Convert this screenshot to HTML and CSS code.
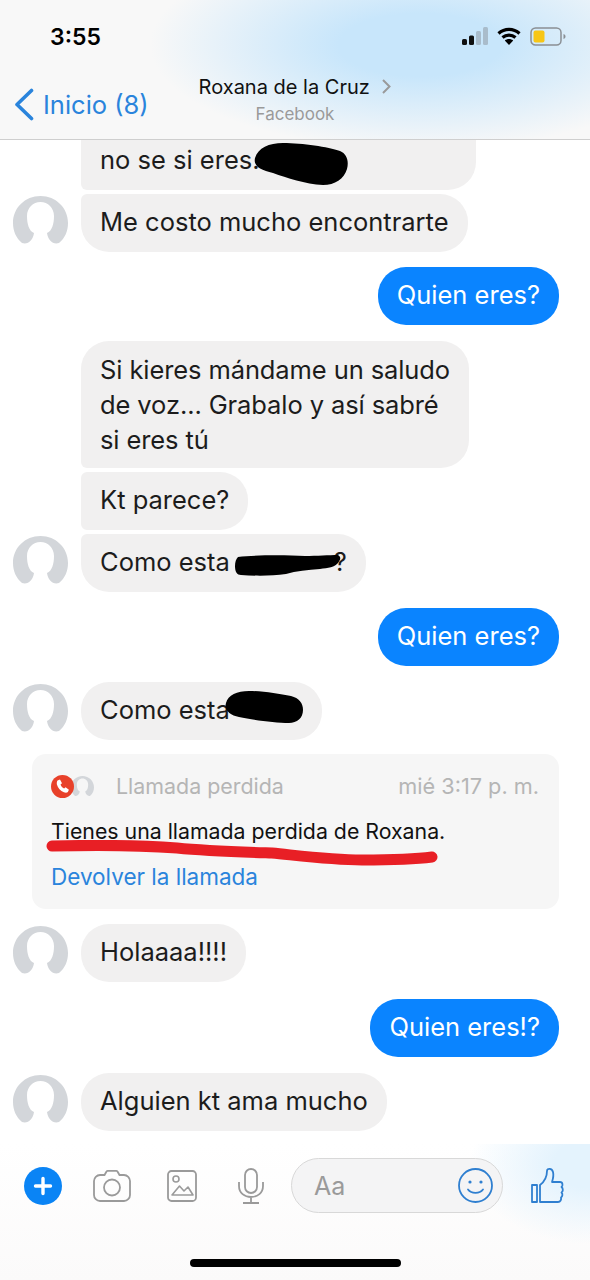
FILE: index.html
```html
<!DOCTYPE html>
<html lang="es">
  <head>
    <meta charset="UTF-8" />
    <meta name="viewport" content="width=device-width, initial-scale=1.0" />
    <title>Roxana de la Cruz</title>
    <link rel="stylesheet" href="styles.css">
  </head>
  <body>
    <svg class="defs" width="0" height="0">
      <symbol id="avatar" viewBox="0 0 55 50">
        <path fill="#d3d6da" d="M9 47C3 42 0 35 0 27 0 12 12 0 27.5 0S55 12 55 27c0 8-3 15-9 20-6 2-11-3-12-10 5-2 7-9 7-17 0-8-6-14-13.500-14S14 12 14 20c0 8 2 15 7 17-1 7-6 12-12 10z" />
      </symbol>
    </svg>

    <header class="top">
      <div class="status">
        <span class="time">3:55</span>
        <div class="status-icons">
          <svg class="signal" width="26" height="18" viewBox="0 0 26 18">
            <rect x="0" y="12" width="5" height="6" rx="1.500" fill="#111" />
            <rect x="7" y="8.500" width="5" height="9.500" rx="1.500" fill="#111" />
            <rect x="14" y="4" width="5" height="14" rx="1.500" fill="#a9bccb" />
            <rect x="21" y="0" width="5" height="18" rx="1.500" fill="#a9bccb" />
          </svg>
          <svg class="wifi" width="24" height="18" viewBox="0 0 24 18">
            <path fill="none" stroke="#000" stroke-width="3.200" d="M1.500 6.500C7.500 1 16.500 1 22.500 6.500M5.500 10.500c3.800-3.300 9.200-3.300 13 0" />
            <path d="M12 18l-4.200-4.500c2.400-2 6-2 8.400 0z" />
          </svg>
          <svg class="battery" width="36" height="19" viewBox="0 0 36 19">
            <rect x="1" y="1" width="30" height="17" rx="4.500" fill="none" stroke="#8a8f94" stroke-width="1.500" />
            <rect x="3.500" y="3.500" width="11" height="12" rx="2" fill="#f7c616" />
            <path d="M33.500 7v5c1.500-.5 2-1.500 2-2.500s-.5-2-2-2.500z" fill="#8a8f94" />
          </svg>
        </div>
      </div>
      <div class="nav">
        <a class="back">
          <svg width="20" height="33" viewBox="0 0 20 33">
            <path fill="none" stroke="#2a84dc" stroke-width="3.600" stroke-linecap="round" stroke-linejoin="round" d="M17.500 2.500L3 16.500l14.500 14" />
          </svg>
          <span>Inicio (8)</span>
        </a>
        <div class="who">
          <div class="who-name">
            Roxana de la Cruz
            <svg width="9" height="15" viewBox="0 0 9 15">
              <path fill="none" stroke="#9a9a9a" stroke-width="2" d="M1 1l6.500 6.500L1 14" />
            </svg>
          </div>
          <div class="who-sub">Facebook</div>
        </div>
        <div></div>
      </div>
    </header>

    <main class="chat">
      <div class="row in first">
        <div class="bubble clipped">
          no se si eres.
          <svg class="blot blot-a" width="96" height="42" viewBox="0 0 96 42">
            <path d="M2 15C5 5 16 0 30 0c20 0 45 4 57 8 7 3 9 10 7 18-3 10-12 16-24 16-18-1-36-7-50-12C9 27 0 24 2 15z" />
          </svg>
        </div>
      </div>
      <div class="row in tight avatar-row">
        <svg class="avatar"><use href="#avatar" /></svg>
        <div class="bubble joined">Me costo mucho encontrarte</div>
      </div>

      <div class="row out mt15"><div class="bubble blue">Quien eres?</div></div>

      <div class="row in">
        <div class="bubble multi">Si kieres mándame un saludo<br />de voz... Grabalo y así sabré<br />si eres tú</div>
      </div>
      <div class="row in tight"><div class="bubble joined mid">Kt parece?</div></div>
      <div class="row in tight avatar-row">
        <svg class="avatar"><use href="#avatar" /></svg>
        <div class="bubble joined">
          Como esta<span class="gap-b"></span>?
          <svg class="blot blot-b" width="106" height="22" viewBox="0 0 106 22">
            <path d="M3 3C20 1 50 1 70 2c12 0 24-1 33-1 3 2 3 4 0 8-3 4-10 5-18 6-12 1-24 2-34 5-14 2-30 2-45 1C2 21 0 18 0 12 0 8 1 5 3 3z" />
          </svg>
        </div>
      </div>

      <div class="row out"><div class="bubble blue">Quien eres?</div></div>

      <div class="row in avatar-row">
        <svg class="avatar"><use href="#avatar" /></svg>
        <div class="bubble">
          Como esta<span class="gap-c"></span>
          <svg class="blot blot-c" width="78" height="32" viewBox="0 0 78 32">
            <path d="M1 12C3 4 12 0 24 0c14 0 30 3 42 5 8 2 12 7 12 14 0 8-6 13-14 13-14 0-36-3-50-6C5 24-1 19 1 12z" />
          </svg>
        </div>
      </div>

      <section class="call">
        <div class="call-head">
          <div class="call-icons">
            <svg class="call-avatar"><use href="#avatar" /></svg>
            <svg class="call-phone" width="23" height="23" viewBox="0 0 23 23">
              <circle cx="11.500" cy="11.500" r="11.500" fill="#e8412a" />
              <path fill="#fff" d="M6.500 5.500l2.500-1 2 3.800-1.500 1.300c.6 1.800 2 3.300 3.600 4l1.500-1.300 3.300 2.400-1 2.300c-1 .8-2.500.8-4 .2-3.500-1.400-6-4.200-7-7.700-.3-1.700 0-3 .6-4z" />
            </svg>
          </div>
          <span class="call-title">Llamada perdida</span>
          <span class="call-time">mié 3:17 p. m.</span>
        </div>
        <p class="call-text">Tienes una llamada perdida de Roxana.</p>
        <a class="call-link">Devolver la llamada</a>
        <svg class="scribble" width="400" height="28" viewBox="0 0 400 28">
          <path fill="none" stroke="#e81f25" stroke-width="11" stroke-linecap="round" stroke-linejoin="round" d="M6 6c40-1 85-1 125 2 30 3 65 4 95 5 30 3 60 7 90 7 25 0 55-1 70-3" />
        </svg>
      </section>

      <div class="row in mt15 avatar-row">
        <svg class="avatar"><use href="#avatar" /></svg>
        <div class="bubble">Holaaaa!!!!</div>
      </div>

      <div class="row out mt17"><div class="bubble blue">Quien eres!?</div></div>

      <div class="row in avatar-row">
        <svg class="avatar"><use href="#avatar" /></svg>
        <div class="bubble">Alguien kt ama mucho</div>
      </div>
    </main>

    <footer class="composer">
      <div class="tools">
        <svg class="tool-plus" width="38" height="38" viewBox="0 0 38 38">
          <circle cx="19" cy="19" r="19" fill="#0a84f5" />
          <path stroke="#fff" stroke-width="3.400" stroke-linecap="round" d="M19 11.500v15M11.500 19h15" />
        </svg>
        <svg class="tool-camera" width="38" height="32" viewBox="0 0 38 32">
          <path fill="none" stroke="#9a9a9a" stroke-width="1.800" d="M7 5h4.500l2-3.500c.3-.4.700-.6 1.200-.6h8.600c.5 0 .9.200 1.200.6l2 3.500H31c3.300 0 6 2.700 6 6v14c0 3.300-2.700 6-6 6H7c-3.300 0-6-2.700-6-6V11c0-3.300 2.700-6 6-6z" />
          <circle cx="19" cy="17.500" r="8" fill="none" stroke="#9a9a9a" stroke-width="1.800" />
        </svg>
        <svg class="tool-image" width="30" height="32" viewBox="0 0 30 32">
          <rect x="1" y="1" width="28" height="30" rx="3.500" fill="none" stroke="#9a9a9a" stroke-width="1.800" />
          <circle cx="9" cy="9" r="3" fill="none" stroke="#9a9a9a" stroke-width="1.600" />
          <path fill="none" stroke="#9a9a9a" stroke-width="1.600" stroke-linejoin="round" d="M5 25l7.500-9 4.500 5 4-4 5 8z" />
        </svg>
        <svg class="tool-mic" width="26" height="36" viewBox="0 0 26 36">
          <rect x="7" y="1" width="12" height="24" rx="6" fill="none" stroke="#9a9a9a" stroke-width="1.800" />
          <path fill="none" stroke="#9a9a9a" stroke-width="1.800" d="M1 14v4c0 7 5.500 11 12 11s12-4 12-11v-4M13 29v6M5 35h16" />
        </svg>
        <div class="input">
          <span class="input-hint">Aa</span>
          <svg width="35" height="35" viewBox="0 0 35 35">
            <circle cx="17.500" cy="17.500" r="16.500" fill="none" stroke="#2f7fd0" stroke-width="1.800" />
            <circle cx="12" cy="14" r="1.600" fill="#2f7fd0" />
            <circle cx="23" cy="14" r="1.600" fill="#2f7fd0" />
            <path fill="none" stroke="#2f7fd0" stroke-width="1.800" stroke-linecap="round" d="M10 21.500c3.500 4.500 11.500 4.500 15 0" />
          </svg>
        </div>
        <svg class="tool-like" width="34" height="38" viewBox="0 0 34 38">
          <path fill="none" stroke="#2f7fd0" stroke-width="1.800" stroke-linejoin="round" d="M1 18h5v17H1zM9 35V18c4-3 7-8 7-14 0-3 5-3 6 1 1 4 0 7-1 10h8c3 0 3 4 1.500 5 2 1.500 1.500 4.500 0 5.500 1.500 1.500 1 4-.5 5 .5 2-.5 4.500-3 4.500z" />
        </svg>
      </div>
      <div class="home-bar"></div>
    </footer>
  </body>
</html>
```

FILE: styles.css
```css
* {
  box-sizing: border-box;
}

body {
  margin: 0;
  width: 590px;
  height: 1280px;
  overflow: hidden;
  display: flex;
  flex-direction: column;
  background-color: #ffffff;
  color: #1c1c1c;
  font-family: Inter, "Noto Sans", sans-serif;
}

.defs {
  position: absolute;
}

/* cabecera */
.top {
  height: 140px;
  flex: none;
  border-bottom: 1px solid #cfcfcf;
  background:
    radial-gradient(ellipse 270px 105px at 420px 45px, #c8e6fb 30%, rgba(200, 230, 251, 0) 100%),
    #f8f8f8;
}

.status {
  height: 72px;
  display: flex;
  align-items: center;
  justify-content: space-between;
  padding: 0 24px 0 50px;
}

.time {
  margin-top: 2px;
  font-size: 23px;
  font-weight: 600;
  color: #000000;
}

.status-icons {
  display: flex;
  align-items: center;
  gap: 9px;
}

.nav {
  display: grid;
  grid-template-columns: 1fr auto 1fr;
  align-items: center;
  height: 58px;
}

.back {
  display: flex;
  align-items: center;
  gap: 9px;
  margin-top: 6px;
  padding-left: 14px;
  color: #2a84dc;
  font-size: 25.500px;
  white-space: nowrap;
}

.who {
  text-align: center;
  margin-top: -2px;
}

.who-name {
  font-size: 20px;
  line-height: 27px;
  color: #111111;
  white-space: nowrap;
}

.who-name svg {
  margin-left: 7px;
}

.who-sub {
  margin-top: 1px;
  font-size: 17px;
  line-height: 24px;
  color: #9a9a9a;
}

/* mensajes */
.chat {
  flex: 1;
  overflow: hidden;
}

.row {
  display: flex;
  margin-top: 16px;
}

.row.first {
  margin-top: 0;
}

.row.tight {
  margin-top: 4px;
}

.row.mt15 {
  margin-top: 15px;
}

.row.mt17 {
  margin-top: 17px;
}

.row.in {
  padding-left: 81px;
}

.row.avatar-row {
  padding-left: 13px;
  gap: 13px;
}

.row.out {
  justify-content: flex-end;
  padding-right: 31px;
}

.avatar {
  width: 55px;
  height: 50px;
  flex: none;
  margin-top: 2px;
}

.bubble {
  position: relative;
  min-height: 58px;
  padding: 10px 19px 13px;
  border-radius: 28px;
  background-color: #f1f0f0;
  font-size: 25.500px;
  line-height: 35px;
  white-space: nowrap;
}

.bubble.blue {
  background-color: #0a84ff;
  color: #ffffff;
}

.bubble.clipped {
  width: 395px;
  min-height: 50px;
  height: 50px;
  padding-top: 2px;
  border-radius: 0 0 28px 6px;
}

.bubble.joined {
  border-top-left-radius: 6px;
}

.bubble.multi {
  padding-top: 11px;
  padding-bottom: 11px;
  border-bottom-left-radius: 6px;
  letter-spacing: -0.1px;
}

.bubble.mid {
  border-bottom-left-radius: 6px;
}

.gap-b {
  display: inline-block;
  width: 104px;
}

.gap-c {
  display: inline-block;
  width: 73px;
}

/* tachones encima del texto */
.blot {
  position: absolute;
  fill: #000000;
}

.blot-a {
  left: 172px;
  top: 3px;
}

.blot-b {
  left: 154px;
  top: 20px;
}

.blot-c {
  left: 144px;
  top: 9px;
}

/* llamada perdida */
.call {
  position: relative;
  height: 155px;
  margin: 14px 31px 0 32px;
  padding: 19px 20px 0 19px;
  border-radius: 14px;
  background-color: #f6f6f6;
}

.call-head {
  display: flex;
  align-items: center;
  height: 26px;
  font-size: 21.400px;
  color: #b5b5b5;
}

.call-icons {
  position: relative;
  width: 65px;
  height: 23px;
}

.call-avatar {
  position: absolute;
  left: 20px;
  top: 1px;
  width: 23px;
  height: 21px;
}

.call-phone {
  position: absolute;
  left: 0;
  top: 0;
}

.call-time {
  margin-left: auto;
  font-size: 21.700px;
}

.call-text {
  margin: 18px 0 0;
  font-size: 21.300px;
  line-height: 28px;
  color: #111111;
}

.call-link {
  display: block;
  margin-top: 18px;
  font-size: 22.500px;
  line-height: 28px;
  color: #2a84dc;
}

.scribble {
  position: absolute;
  left: 14px;
  top: 86px;
}

/* barra inferior */
.composer {
  height: 136px;
  flex: none;
  display: flex;
  flex-direction: column;
  background:
    radial-gradient(ellipse 120px 80px at 590px 20px, #e4f3fd 30%, rgba(228, 243, 253, 0) 100%),
    linear-gradient(#ffffff, #fbfafa);
}

.tools {
  display: flex;
  align-items: center;
  height: 55px;
  margin-top: 14px;
  padding-left: 24px;
}

.tool-camera {
  margin-left: 31px;
}

.tool-image {
  margin-left: 36px;
}

.tool-mic {
  margin-left: 41px;
}

.input {
  display: flex;
  align-items: center;
  justify-content: space-between;
  width: 212px;
  height: 55px;
  margin-left: 27px;
  padding: 0 9px 0 22px;
  border: 1.500px solid #d8d8d8;
  border-radius: 28px;
  background-color: #f4f4f5;
}

.input-hint {
  font-size: 25px;
  color: #9a9a9a;
}

.tool-like {
  margin-left: 28px;
}

.home-bar {
  width: 211px;
  height: 8px;
  margin: auto auto 13px;
  border-radius: 4px;
  background-color: #000000;
}
```
